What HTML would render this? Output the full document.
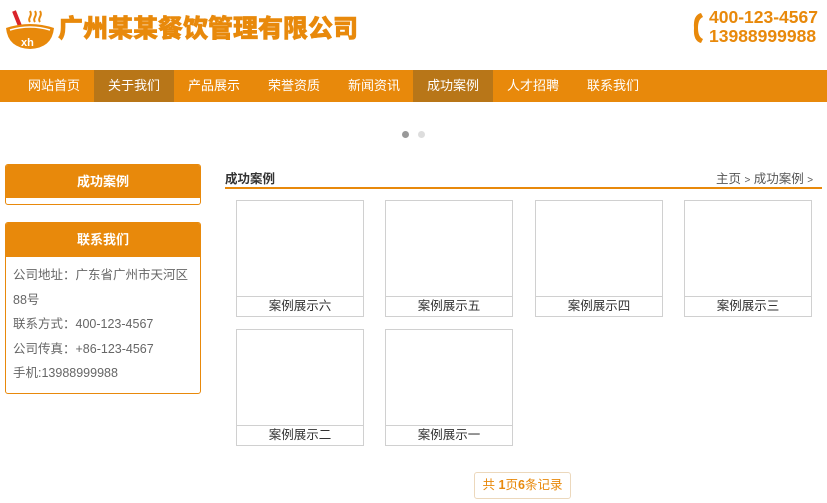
<!DOCTYPE html>
<html><head><meta charset="utf-8"><style>
*{margin:0;padding:0;box-sizing:border-box}
body{width:827px;height:503px;background:#fff;font-family:"Liberation Sans","Noto Sans CJK SC",sans-serif;position:relative;overflow:hidden;color:#333}
.abs{position:absolute}
.title{left:58px;top:12px;font-size:25px;line-height:34px;font-weight:900;color:#e8890b;white-space:nowrap;-webkit-text-stroke:0.6px #e8890b}
.phone{left:709px;top:8px;font-size:17.5px;font-weight:bold;color:#e8890b;line-height:19px}
.nav{left:0;top:70px;width:827px;height:32px;background:#e8890b}
.nav a{position:absolute;top:0;width:80px;height:32px;line-height:32px;text-align:center;color:#fff;font-size:13px;text-decoration:none}
.nav a.on{background:#b87618}
.box{left:5px;width:196px;border:1px solid #e8890b;border-radius:3px;overflow:hidden}
.box h3{background:#e8890b;color:#fff;font-size:13px;text-align:center;font-weight:bold}
.info{font-size:12.5px;color:#666;line-height:24.5px;padding:6px 7px}
.card{width:128px;height:117px;border:1px solid #d0d0d0}
.card div{position:absolute;left:0;right:0;bottom:0;height:20px;border-top:1px solid #d0d0d0;text-align:center;font-size:12.5px;line-height:19px;color:#333}
</style></head><body>
<svg class="abs" style="left:4px;top:6px" width="52" height="44" viewBox="0 0 52 44">
<path d="M10 5 L20 30" stroke="#d9232a" stroke-width="4"/>
<path d="M26 16c-3-4 3-6 0-11M31 16c-3-4 3-6 0-11M36 16c-3-4 3-6 0-11" stroke="#e8890b" stroke-width="2" fill="none"/>
<path d="M2 22 Q26 14 50 22 Q48 42 26 43 Q4 42 2 22Z" fill="#e8890b"/>
<path d="M6 24 Q26 18 46 24" stroke="#fff" stroke-width="1.5" fill="none"/>
<text x="17" y="40" font-size="11" font-weight="bold" fill="#fff" font-family="Liberation Sans">xh</text>
</svg>
<div class="abs title">广州某某餐饮管理有限公司</div>
<svg class="abs" style="left:692px;top:11px" width="14" height="34" viewBox="0 0 14 34"><path d="M9 2 Q1 4 2 17 Q1 30 9 32 L11 28 Q6 26 6 17 Q6 8 11 6Z" fill="#e8890b"/></svg>
<div class="abs phone">400-123-4567<br>13988999988</div>
<div class="abs nav">
<a style="left:14px">网站首页</a><a class="on" style="left:94px">关于我们</a><a style="left:174px">产品展示</a><a style="left:254px">荣誉资质</a><a style="left:334px">新闻资讯</a><a class="on" style="left:413px">成功案例</a><a style="left:493px">人才招聘</a><a style="left:573px">联系我们</a>
</div>
<div class="abs" style="left:402px;top:131px;width:7px;height:7px;border-radius:50%;background:#999"></div>
<div class="abs" style="left:418px;top:131px;width:7px;height:7px;border-radius:50%;background:#ddd"></div>
<div class="abs box" style="top:164px;height:41px"><h3 style="height:33px;line-height:33px">成功案例</h3></div>
<div class="abs box" style="top:222px;height:172px"><h3 style="height:34px;line-height:34px">联系我们</h3>
<div class="info">公司地址：广东省广州市天河区<br>88号<br>联系方式：400-123-4567<br>公司传真：+86-123-4567<br>手机:13988999988</div></div>
<div class="abs" style="left:225px;top:168px;font-size:12.5px;font-weight:bold;color:#333">成功案例</div>
<div class="abs" style="left:716px;top:168px;font-size:12.5px;color:#555">主页 <span style="font-size:10px">&gt;</span> 成功案例 <span style="font-size:10px">&gt;</span></div>
<div class="abs" style="left:225px;top:187px;width:597px;height:1.5px;background:#e8890b"></div>
<div class="abs card" style="left:236px;top:200px"><div>案例展示六</div></div>
<div class="abs card" style="left:385px;top:200px"><div>案例展示五</div></div>
<div class="abs card" style="left:535px;top:200px"><div>案例展示四</div></div>
<div class="abs card" style="left:684px;top:200px"><div>案例展示三</div></div>
<div class="abs card" style="left:236px;top:329px"><div>案例展示二</div></div>
<div class="abs card" style="left:385px;top:329px"><div>案例展示一</div></div>
<div class="abs" style="left:474px;top:472px;width:97px;height:27px;border:1px solid #ecd8bc;border-radius:3px;text-align:center;line-height:25px;font-size:12.5px;color:#e8890b">共 <b>1</b>页<b>6</b>条记录</div>
</body></html>
